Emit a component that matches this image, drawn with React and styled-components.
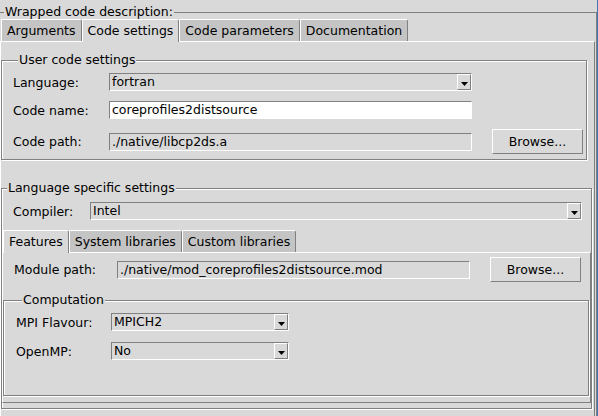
import React from "react";
import styled, { createGlobalStyle } from "styled-components";

const GlobalStyle = createGlobalStyle`
  body {
    margin: 0;
    font-family: "DejaVu Sans", Verdana, sans-serif;
    font-size: 12.5px;
    color: #000;
    background: #d9d9d9;
  }
  * { box-sizing: border-box; }
`;

const Window = styled.div`
  width: 598px;
  height: 416px;
  overflow: hidden;
  background: #d9d9d9;
  border-right: 1px solid #4576b0;
  padding-top: 4px;
`;

const Group = styled.fieldset`
  margin: ${({ $margin }) => $margin || "0"};
  padding: ${({ $pad }) => $pad || "0"};
  min-width: 0;
  width: ${({ $w }) => ($w ? `${$w}px` : "auto")};
  border: 1px solid #808080;
  box-shadow: inset 1px 1px 0 #fff, 1px 1px 0 #fff;
`;

const OuterGroup = styled(Group)`
  border-left: 0;
  border-bottom: 0;
  box-shadow: 1px 0 0 #fff;
  padding: 0 1px 0 0;
`;

const Title = styled.legend`
  margin-left: ${({ $indent }) => $indent ?? 5}px;
  padding: 0 1px;
  line-height: 16px;
  background: #d9d9d9;
`;

const TabStrip = styled.div`
  display: flex;
  align-items: flex-start;
  height: 22px;
  margin-top: ${({ $top }) => $top || 0}px;
  padding-left: 1px;
`;

const Tab = styled.div`
  position: relative;
  z-index: 1;
  height: ${({ $active }) => ($active ? 23 : 22)}px;
  padding: 0 5px;
  line-height: 21px;
  white-space: nowrap;
  background: ${({ $active }) => ($active ? "#d9d9d9" : "#c4c4c4")};
  border-top: 1px solid #fff;
  border-left: 1px solid #fff;
  border-right: 1px solid #808080;
  border-top-right-radius: 3px;
`;

const TabPanel = styled.div`
  border-top: 1px solid #fff;
  border-left: 1px solid #fff;
  border-right: 1px solid #808080;
  border-bottom: 1px solid #808080;
  padding: ${({ $pad }) => $pad || "0"};
`;

const Row = styled.div`
  display: flex;
  align-items: center;
  height: ${({ $h }) => $h || 18}px;
  margin-top: ${({ $gap }) => $gap || 0}px;
  padding-left: ${({ $indent }) => $indent || 0}px;
`;

const Label = styled.span`
  flex: none;
  width: ${({ $w }) => $w}px;
  white-space: nowrap;
`;

const Field = styled.div`
  flex: none;
  width: ${({ $w }) => $w}px;
  height: 18px;
  padding-left: 2px;
  line-height: 16px;
  white-space: nowrap;
  overflow: hidden;
  background: ${({ $editable }) => ($editable ? "#fff" : "transparent")};
  border-top: 1px solid #808080;
  border-left: 1px solid #808080;
  border-bottom: 1px solid #fff;
  border-right: 1px solid #fff;
`;

const Combo = styled(Field)`
  display: flex;
  padding-left: 0;
`;

const ComboText = styled.span`
  flex: 1;
  padding-left: 2px;
`;

const ArrowButton = styled.span`
  flex: none;
  display: flex;
  justify-content: center;
  align-items: flex-start;
  width: 14px;
  height: 16px;
  padding-top: 7px;
  border-top: 1px solid #fff;
  border-left: 1px solid #fff;
  border-right: 1px solid #808080;
  border-bottom: 1px solid #808080;
`;

const Button = styled.div`
  flex: none;
  width: 91px;
  height: 25px;
  margin-left: 20px;
  line-height: 23px;
  text-align: center;
  border-top: 1px solid #fff;
  border-left: 1px solid #fff;
  border-right: 1px solid #808080;
  border-bottom: 1px solid #808080;
`;

function ComboBox({ width, value }) {
  return (
    <Combo $w={width}>
      <ComboText>{value}</ComboText>
      <ArrowButton>
        <svg width="7" height="4" viewBox="0 0 7 4">
          <path d="M0 0h7L3.5 4z" fill="#000" />
        </svg>
      </ArrowButton>
    </Combo>
  );
}

const outerTabs = ["Arguments", "Code settings", "Code parameters", "Documentation"];
const innerTabs = ["Features", "System libraries", "Custom libraries"];

export default function App() {
  return (
    <Window>
      <GlobalStyle />
      <OuterGroup>
        <Title $indent={4}>Wrapped code description:</Title>
        <TabStrip $top={-1}>
          {outerTabs.map((t) => (
            <Tab key={t} $active={t === "Code settings"}>{t}</Tab>
          ))}
        </TabStrip>
        <TabPanel $pad="10px 0 20px 0">
          <Group $w={586} $pad="5px 0 5px 11px">
            <Title>User code settings</Title>
            <Row>
              <Label $w={96}>Language:</Label>
              <ComboBox width={363} value="fortran" />
            </Row>
            <Row $gap={10}>
              <Label $w={96}>Code name:</Label>
              <Field $w={363} $editable>coreprofiles2distsource</Field>
            </Row>
            <Row $gap={10} $h={25}>
              <Label $w={96}>Code path:</Label>
              <Field $w={363}>./native/libcp2ds.a</Field>
              <Button>Browse...</Button>
            </Row>
          </Group>

          <Group $w={591} $margin="20px 0 0 0" $pad="6px 0 5px 0">
            <Title>Language specific settings</Title>
            <Row $indent={11}>
              <Label $w={77}>Compiler:</Label>
              <ComboBox width={492} value="Intel" />
            </Row>

            <TabStrip $top={10}>
              {innerTabs.map((t) => (
                <Tab key={t} $active={t === "Features"}>{t}</Tab>
              ))}
            </TabStrip>
            <TabPanel $pad="4px 0 6px 0">
              <Row $h={25} $indent={11}>
                <Label $w={103}>Module path:</Label>
                <Field $w={353}>./native/mod_coreprofiles2distsource.mod</Field>
                <Button>Browse...</Button>
              </Row>

              <Group $margin="10px 1px 0 0" $pad="5px 0 35px 12px">
                <Title $indent={6}>Computation</Title>
                <Row>
                  <Label $w={95}>MPI Flavour:</Label>
                  <ComboBox width={178} value="MPICH2" />
                </Row>
                <Row $gap={11}>
                  <Label $w={95}>OpenMP:</Label>
                  <ComboBox width={178} value="No" />
                </Row>
              </Group>
            </TabPanel>
          </Group>
        </TabPanel>
      </OuterGroup>
    </Window>
  );
}
